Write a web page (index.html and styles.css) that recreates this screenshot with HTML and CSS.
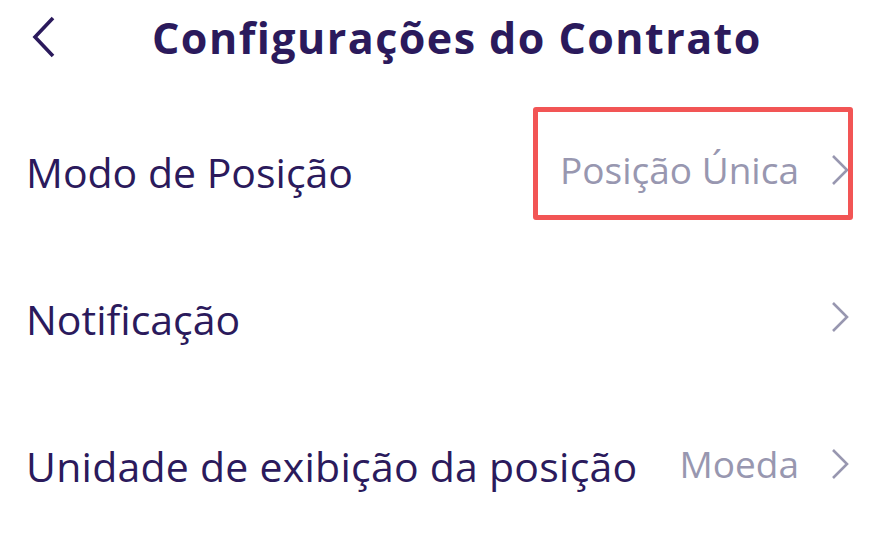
FILE: index.html
```html
<!DOCTYPE html>
<html lang="pt">
<head>
<meta charset="utf-8">
<link rel="stylesheet" href="styles.css">
</head>
<body>
<div class="page">
  <header class="header">
    <svg class="back" viewBox="0 0 26 42" width="26" height="42"><path d="M22 2 L4 21 L22 40" fill="none" stroke="#2b1a5c" stroke-width="3.6" stroke-linecap="butt" stroke-linejoin="miter"/></svg>
    <h1 class="title">Configurações do Contrato</h1>
  </header>
  <ul class="list">
    <li class="row">
      <span class="label">Modo de Posição</span>
      <span class="right">
        <span class="value">Posição Única</span>
        <svg class="chev" viewBox="0 0 18 32" width="18" height="32"><path d="M2 2 L16 16 L2 30" fill="none" stroke="#9897b0" stroke-width="2.6"/></svg>
      </span>
      <span class="highlight"></span>
    </li>
    <li class="row">
      <span class="label">Notificação</span>
      <span class="right">
        <svg class="chev" viewBox="0 0 18 32" width="18" height="32"><path d="M2 2 L16 16 L2 30" fill="none" stroke="#9897b0" stroke-width="2.6"/></svg>
      </span>
    </li>
    <li class="row">
      <span class="label wide">Unidade de exibição da posição</span>
      <span class="right">
        <span class="value">Moeda</span>
        <svg class="chev" viewBox="0 0 18 32" width="18" height="32"><path d="M2 2 L16 16 L2 30" fill="none" stroke="#9897b0" stroke-width="2.6"/></svg>
      </span>
    </li>
  </ul>
</div>
</body>
</html>
```
FILE: styles.css
```css
* { box-sizing: border-box; }
html, body { margin: 0; padding: 0; background: #fff; }
body { font-family: "Open Sans", "Noto Sans", sans-serif; color: #2b1a5c; }
.page { width: 888px; height: 549px; overflow: hidden; }
.header {
  height: 75px;
  display: flex;
  align-items: center;
  padding-left: 31px;
}
.back { display: block; margin-top: -1px; }
.title {
  margin: 0 0 0 95px;
  font-size: 43px;
  font-weight: 700;
  letter-spacing: 1.45px;
  line-height: 1;
  color: #2b1a5c;
}
.list { list-style: none; margin: 21px 0 0; padding: 0; }
.row {
  position: relative;
  height: 147px;
  display: flex;
  align-items: center;
  justify-content: space-between;
  padding: 0 39px 0 26px;
}
.label { font-size: 41px; line-height: 1; padding-top: 6px; }
.label.wide { letter-spacing: 0.25px; }
.right { display: flex; align-items: center; gap: 32px; }
.value { font-size: 37px; color: #9897b0; line-height: 1; }
.chev { display: block; }
.highlight {
  position: absolute;
  left: 533px;
  top: 11px;
  width: 320px;
  height: 113px;
  border: 5px solid #f25555;
  border-radius: 3px;
}
```
